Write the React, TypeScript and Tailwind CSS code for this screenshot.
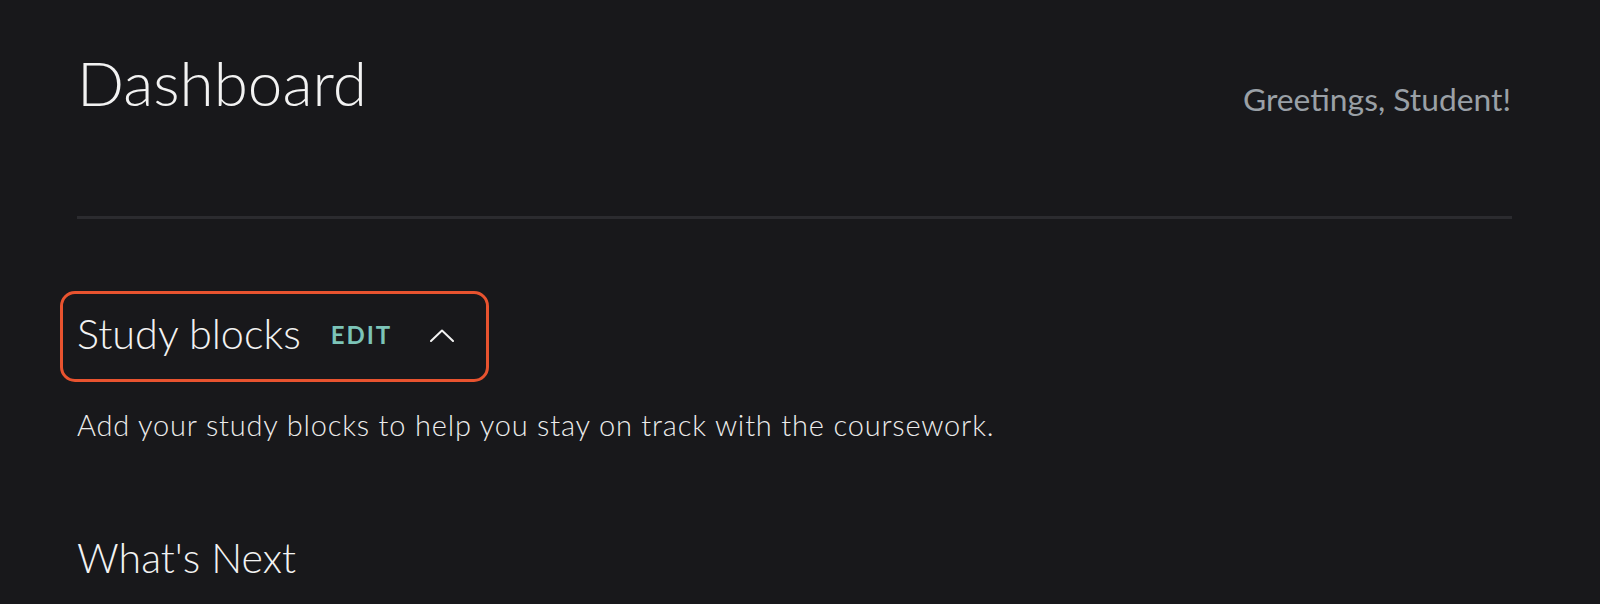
function Header() {
  return (
    <div className="flex items-start justify-between">
      <h1 className="text-[62px] leading-[62px] font-light text-[#f2f2f2]">Dashboard</h1>
      <p className="mt-[33px] mr-[1px] text-[31.8px] leading-[31.8px] font-normal text-[#9aa0a6]">Greetings, Student!</p>
    </div>
  )
}

function StudyBlocks() {
  return (
    <section>
      <div className="-ml-[17px] inline-flex h-[91px] w-[429px] items-center rounded-[15px] border-[3px] border-[#e8532f] pl-[14px]">
        <h2 className="mb-[6px] text-[41.4px] leading-[41.4px] font-light text-[#f2f2f2]">Study blocks</h2>
        <button className="ml-[30px] mb-[2px] text-[24px] leading-[24px] font-bold tracking-[0.08em] text-[#7cc4b8]">EDIT</button>
        <svg className="ml-[38px] mb-[2px]" width="24" height="13" viewBox="0 0 24 13" fill="none">
          <polyline points="1,12 12,1.5 23,12" stroke="#f2f2f2" strokeWidth="2" strokeLinecap="round" strokeLinejoin="round" />
        </svg>
      </div>
      <p className="mt-[28px] text-[29px] leading-[29px] font-light tracking-[0.028em] text-[#ececec]">
        Add your study blocks to help you stay on track with the coursework.
      </p>
    </section>
  )
}

export default function App() {
  return (
    <div
      className="min-h-[604px] w-full bg-[#18181b] pt-[51px] pl-[77px] pr-[88px]"
      style={{ fontFamily: 'Lato, "Open Sans", sans-serif' }}
    >
      <Header />
      <div className="mt-[100px] h-[3px] bg-[#2b2b2f]" />
      <div className="mt-[72px]">
        <StudyBlocks />
      </div>
      <h2 className="mt-[98px] text-[41px] leading-[41px] font-light text-[#f2f2f2]">What's Next</h2>
    </div>
  )
}
